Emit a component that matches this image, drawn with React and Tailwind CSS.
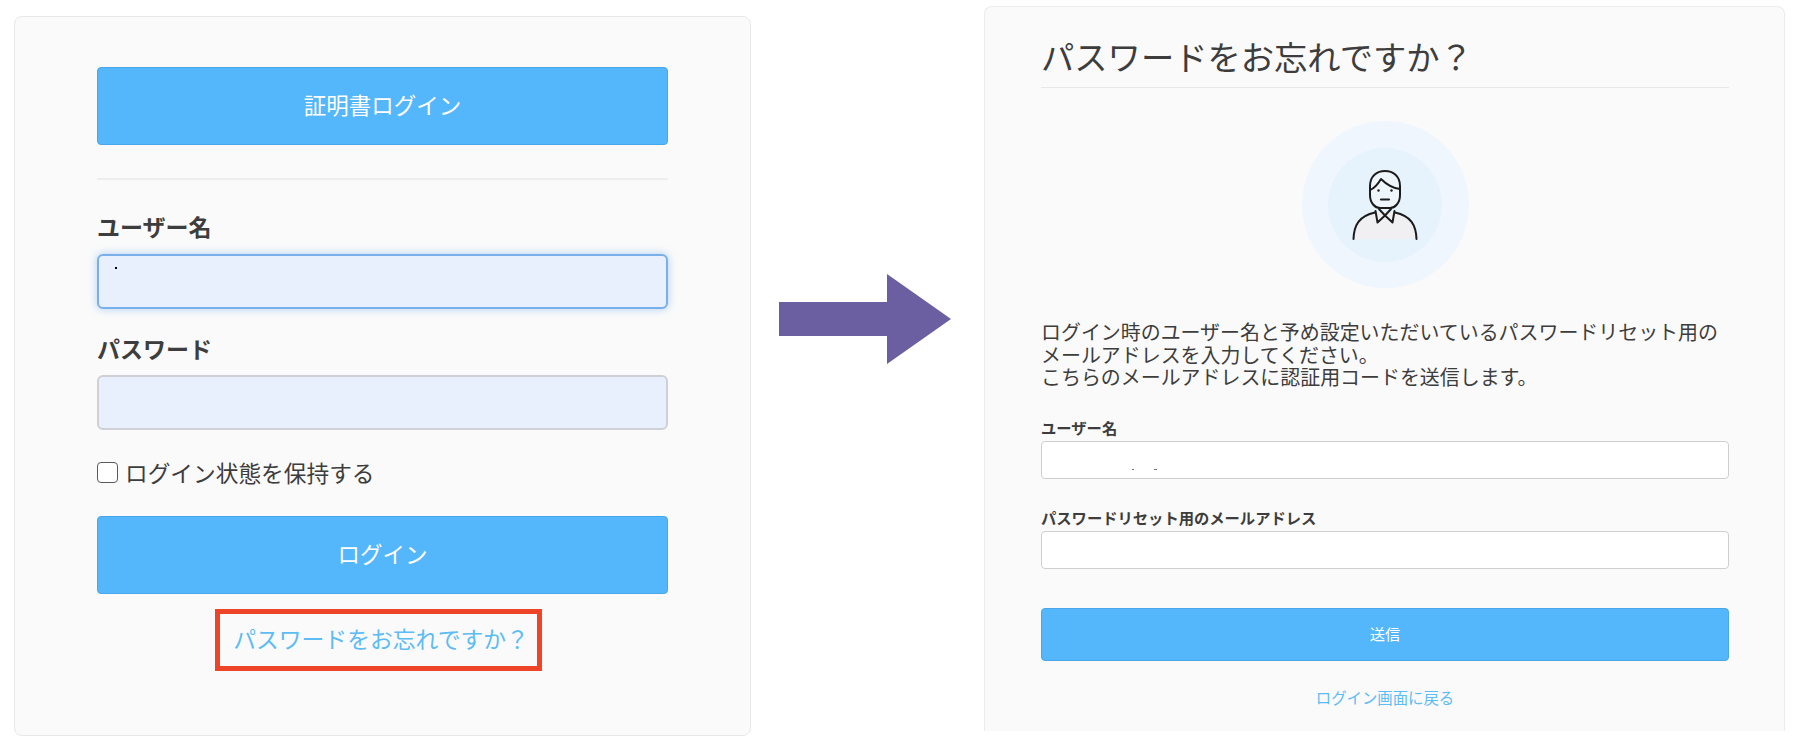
import React from 'react';

const jp = { fontFamily: '"Noto Sans CJK JP", "Noto Sans", sans-serif' };

const Person = () => (
  <svg width="80" height="80" viewBox="0 0 80 80" fill="none" stroke="#1c1c1c" strokeWidth="2" strokeLinecap="round" strokeLinejoin="round">
    <path d="M8.5 74C9 62 12 52 30 47.5H50C68 52 71 62 71.5 74Z" fill="#f0f0f2" stroke="none" />
    <path d="M8.5 74C9 60 14 51 30 47.5M71.5 74C71 60 66 51 50 47.5" />
    <path d="M25 21V30C25 38 30 43 35 43H45C50 43 55 38 55 30V21C55 11 48 6 40 6C32 6 25 11 25 21Z" fill="#eef5fb" />
    <path d="M25 25C30 23 33 19 36 14C41 19 47 23 55 24" />
    <path d="M30.5 46L32.5 57.5L40 50.5L47.5 57.5L49.5 46M40 50.5L34 44M40 50.5L46 44" />
    <circle cx="33.5" cy="25.5" r="1.2" fill="#1c1c1c" stroke="none" />
    <circle cx="46.5" cy="25.5" r="1.2" fill="#1c1c1c" stroke="none" />
    <path d="M36 34.5H44" strokeWidth="2.2" />
  </svg>
);

const Arrow = () => (
  <svg width="172" height="90" viewBox="0 0 172 90">
    <path d="M0 28H108V0L172 45L108 90V62H0Z" fill="#6c5fa1" />
  </svg>
);

export default function App() {
  return (
    <div className="flex w-[1802px] h-[756px] overflow-hidden bg-white text-[#3d3d3d]" style={jp}>
      <div className="ml-[14px] mt-[16px] w-[737px] h-[720px] shrink-0 rounded-lg border border-[#e8e8e8] bg-[#fafafa] pl-[82px] pr-[82px] pt-[50px]">
        <button className="block w-full h-[78px] rounded border border-[#4aa6ea] bg-[#54b6fb] pb-[2px] text-[22.5px] text-white">証明書ログイン</button>
        <div className="mt-[33px] h-[2px] bg-[#eeeeee]" />
        <div className="mt-[31px] h-[30px] text-[23px] leading-[30px] font-bold">ユーザー名</div>
        <div className="relative mt-[13px] h-[55px] rounded-md border-2 border-[#7ab0ea] bg-[#e8f0fe] shadow-[0_0_8px_rgba(110,170,240,0.55)]">
          <span className="absolute left-[16px] top-[11px] w-[2px] h-[2px] bg-black" />
        </div>
        <div className="mt-[24px] h-[30px] text-[23px] leading-[30px] font-bold">パスワード</div>
        <div className="mt-[12px] h-[55px] rounded-md border-2 border-[#cfcfd6] bg-[#e8f0fe]" />
        <label className="mt-[32px] flex h-[21px] items-center gap-[7px] text-[22.7px] leading-[21px]">
          <span className="w-[21px] h-[21px] shrink-0 rounded-[4px] border-[1.5px] border-[#5a5a5a] bg-white" />
          ログイン状態を保持する
        </label>
        <button className="mt-[33px] block w-full h-[78px] rounded border border-[#4aa6ea] bg-[#54b6fb] pb-[2px] text-[22.5px] text-white">ログイン</button>
        <div className="mt-[15px] ml-[118px] flex h-[62px] w-[327px] items-center justify-center border-[5px] border-[#ee4427] pb-[2px] pl-[5px] text-[22.8px] text-[#5cbcf5]">
          パスワードをお忘れですか？
        </div>
      </div>

      <div className="ml-[28px] mt-[274px] shrink-0 h-[90px]">
        <Arrow />
      </div>

      <div className="ml-[33px] mt-[6px] w-[801px] h-[725px] shrink-0 rounded-t-lg border border-b-0 border-[#ececec] bg-[#fafafa] pl-[56px] pr-[55px]">
        <h1 className="mt-[24px] h-[50px] text-[33.3px] leading-[50px]">パスワードをお忘れですか？</h1>
        <div className="mt-[6px] h-px bg-[#e8e8e8]" />
        <div className="mt-[33px] flex justify-center">
          <div className="flex w-[167px] h-[167px] items-center justify-center rounded-full bg-[#f0f6fe]">
            <div className="flex w-[114px] h-[114px] items-center justify-center rounded-full bg-[#e6f3fd]">
              <Person />
            </div>
          </div>
        </div>
        <p className="mt-[33px] text-[19.95px] leading-[22.5px]">
          ログイン時のユーザー名と予め設定いただいているパスワードリセット用の
          <br />
          メールアドレスを入力してください。
          <br />
          こちらのメールアドレスに認証用コードを送信します。
        </p>
        <div className="mt-[28px] h-[20px] text-[15.3px] leading-[20px] font-bold">ユーザー名</div>
        <div className="relative mt-[4px] h-[38px] rounded border-[1.5px] border-[#cfcfcf] bg-white">
          <span className="absolute left-[90px] top-[27px] w-[2px] h-px bg-[#777777]" />
          <span className="absolute left-[112px] top-[27px] w-[3px] h-px bg-[#777777]" />
        </div>
        <div className="mt-[28px] h-[20px] text-[15.3px] leading-[20px] font-bold">パスワードリセット用のメールアドレス</div>
        <div className="mt-[4px] h-[38px] rounded border-[1.5px] border-[#cfcfcf] bg-white" />
        <button className="mt-[39px] block w-full h-[53px] rounded border border-[#4aa6ea] bg-[#54b6fb] pb-[2px] text-[15.3px] text-white">送信</button>
        <div className="mt-[26px] text-center text-[15.4px] leading-[20px] text-[#5cbcf5]">ログイン画面に戻る</div>
      </div>
    </div>
  );
}
